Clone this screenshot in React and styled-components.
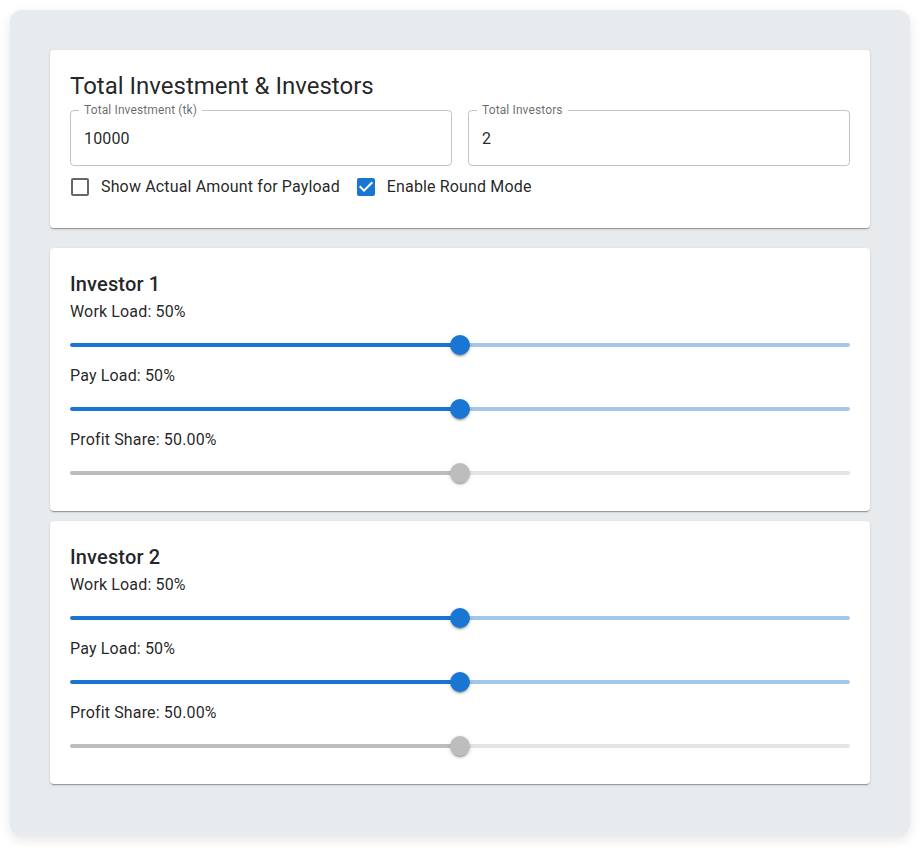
import React from "react";
import styled, { createGlobalStyle } from "styled-components";

const GlobalStyle = createGlobalStyle`
  body {
    margin: 0;
    background: #ffffff;
    font-family: Roboto, "Liberation Sans", sans-serif;
    color: rgba(0, 0, 0, 0.87);
  }
`;

const investors = [
  { id: 1, work: 50, pay: 50, profit: "50.00" },
  { id: 2, work: 50, pay: 50, profit: "50.00" },
];

const CheckIcon = ({ checked }) => (
  <svg width="24" height="24" viewBox="0 0 24 24">
    {checked ? (
      <path
        fill="#1976d2"
        d="M19 3H5c-1.11 0-2 .9-2 2v14c0 1.1.89 2 2 2h14c1.11 0 2-.9 2-2V5c0-1.1-.89-2-2-2zm-9 14l-5-5 1.41-1.41L10 14.17l7.59-7.59L19 8l-9 9z"
      />
    ) : (
      <path
        fill="rgba(0,0,0,0.6)"
        d="M19 5v14H5V5h14m0-2H5c-1.1 0-2 .9-2 2v14c0 1.1.9 2 2 2h14c1.1 0 2-.9 2-2V5c0-1.1-.9-2-2-2z"
      />
    )}
  </svg>
);

const Slider = ({ value, disabled }) => (
  <SliderRoot>
    <Rail $value={value} $disabled={disabled}>
      <Thumb $disabled={disabled} style={{ left: `${value}%` }} />
    </Rail>
  </SliderRoot>
);

const Field = ({ label, value }) => (
  <Fieldset>
    <Legend>{label}</Legend>
    <Input defaultValue={value} />
  </Fieldset>
);

export default function App() {
  return (
    <Page>
      <GlobalStyle />
      <Container>
        <TopCard>
          <Title>Total Investment &amp; Investors</Title>
          <FieldRow>
            <Field label="Total Investment (tk)" value="10000" />
            <Field label="Total Investors" value="2" />
          </FieldRow>
          <CheckRow>
            <CheckLabel>
              <CheckBox>
                <CheckIcon checked={false} />
              </CheckBox>
              Show Actual Amount for Payload
            </CheckLabel>
            <CheckLabel>
              <CheckBox>
                <CheckIcon checked />
              </CheckBox>
              Enable Round Mode
            </CheckLabel>
          </CheckRow>
        </TopCard>
        {investors.map((inv) => (
          <InvestorCard key={inv.id}>
            <InvestorTitle>Investor {inv.id}</InvestorTitle>
            <SliderLabel>Work Load: {inv.work}%</SliderLabel>
            <Slider value={inv.work} />
            <SliderLabel>Pay Load: {inv.pay}%</SliderLabel>
            <Slider value={inv.pay} />
            <SliderLabel>Profit Share: {inv.profit}%</SliderLabel>
            <Slider value={parseFloat(inv.profit)} disabled />
          </InvestorCard>
        ))}
      </Container>
    </Page>
  );
}

const Page = styled.div`
  padding: 10px 13px 10px 10px;
`;

const Container = styled.div`
  width: 900px;
  box-sizing: border-box;
  padding: 40px 40px 52px 40px;
  border-radius: 12px;
  background-color: #e8ebee;
  box-shadow: 0 4px 12px rgba(0, 0, 0, 0.1);
`;

const Card = styled.div`
  background: #ffffff;
  border-radius: 4px;
  padding: 20px;
  box-shadow: 0px 2px 1px -1px rgba(0, 0, 0, 0.2),
    0px 1px 1px 0px rgba(0, 0, 0, 0.14), 0px 1px 3px 0px rgba(0, 0, 0, 0.12);
`;

const TopCard = styled(Card)`
  margin-bottom: 20px;
`;

const InvestorCard = styled(Card)`
  padding-bottom: 19px;
  margin-bottom: 10px;
  &:last-child {
    margin-bottom: 0;
  }
`;

const Title = styled.div`
  font-size: 24px;
  line-height: 32px;
  font-weight: 400;
  margin-bottom: 2px;
`;

const FieldRow = styled.div`
  display: grid;
  grid-template-columns: 1fr 1fr;
  gap: 16px;
`;

const Fieldset = styled.fieldset`
  margin: 0;
  min-width: 0;
  padding: 0 8px;
  border: 1px solid rgba(0, 0, 0, 0.23);
  border-radius: 4px;
`;

const Legend = styled.legend`
  padding: 0 5px;
  font-size: 12px;
  line-height: 12px;
  letter-spacing: 0.01em;
  color: rgba(0, 0, 0, 0.6);
`;

const Input = styled.input`
  display: block;
  width: 100%;
  box-sizing: border-box;
  height: 49px;
  padding: 0 5px 4px 5px;
  border: 0;
  outline: none;
  background: transparent;
  font-family: Roboto, "Liberation Sans", sans-serif;
  font-size: 16px;
  letter-spacing: 0.00938em;
  color: rgba(0, 0, 0, 0.87);
`;

const CheckRow = styled.div`
  display: flex;
  align-items: center;
  height: 42px;
`;

const CheckLabel = styled.label`
  display: inline-flex;
  align-items: center;
  margin-left: -11px;
  margin-right: 16px;
  font-size: 16px;
  line-height: 24px;
  letter-spacing: 0.00938em;
  cursor: pointer;
`;

const CheckBox = styled.span`
  display: inline-flex;
  padding: 9px;
`;

const InvestorTitle = styled.div`
  font-size: 20px;
  line-height: 32px;
  font-weight: 500;
  letter-spacing: 0.0075em;
`;

const SliderLabel = styled.div`
  font-size: 16px;
  line-height: 24px;
  letter-spacing: 0.00938em;
`;

const SliderRoot = styled.div`
  height: 40px;
  box-sizing: border-box;
  padding-top: 19px;
`;

const Rail = styled.div`
  position: relative;
  width: 100%;
  height: 4px;
  border-radius: 2px;
  background: ${({ $value, $disabled }) =>
    $disabled
      ? `linear-gradient(to right, #bdbdbd ${$value}%, #e4e4e4 ${$value}%)`
      : `linear-gradient(to right, #1976d2 ${$value}%, #a3c6ea ${$value}%)`};
`;

const Thumb = styled.span`
  position: absolute;
  top: 50%;
  width: 20px;
  height: 20px;
  border-radius: 50%;
  transform: translate(-50%, -50%);
  background: ${({ $disabled }) => ($disabled ? "#bdbdbd" : "#1976d2")};
  box-shadow: 0px 3px 1px -2px rgba(0, 0, 0, 0.2),
    0px 2px 2px 0px rgba(0, 0, 0, 0.14), 0px 1px 5px 0px rgba(0, 0, 0, 0.12);
`;
